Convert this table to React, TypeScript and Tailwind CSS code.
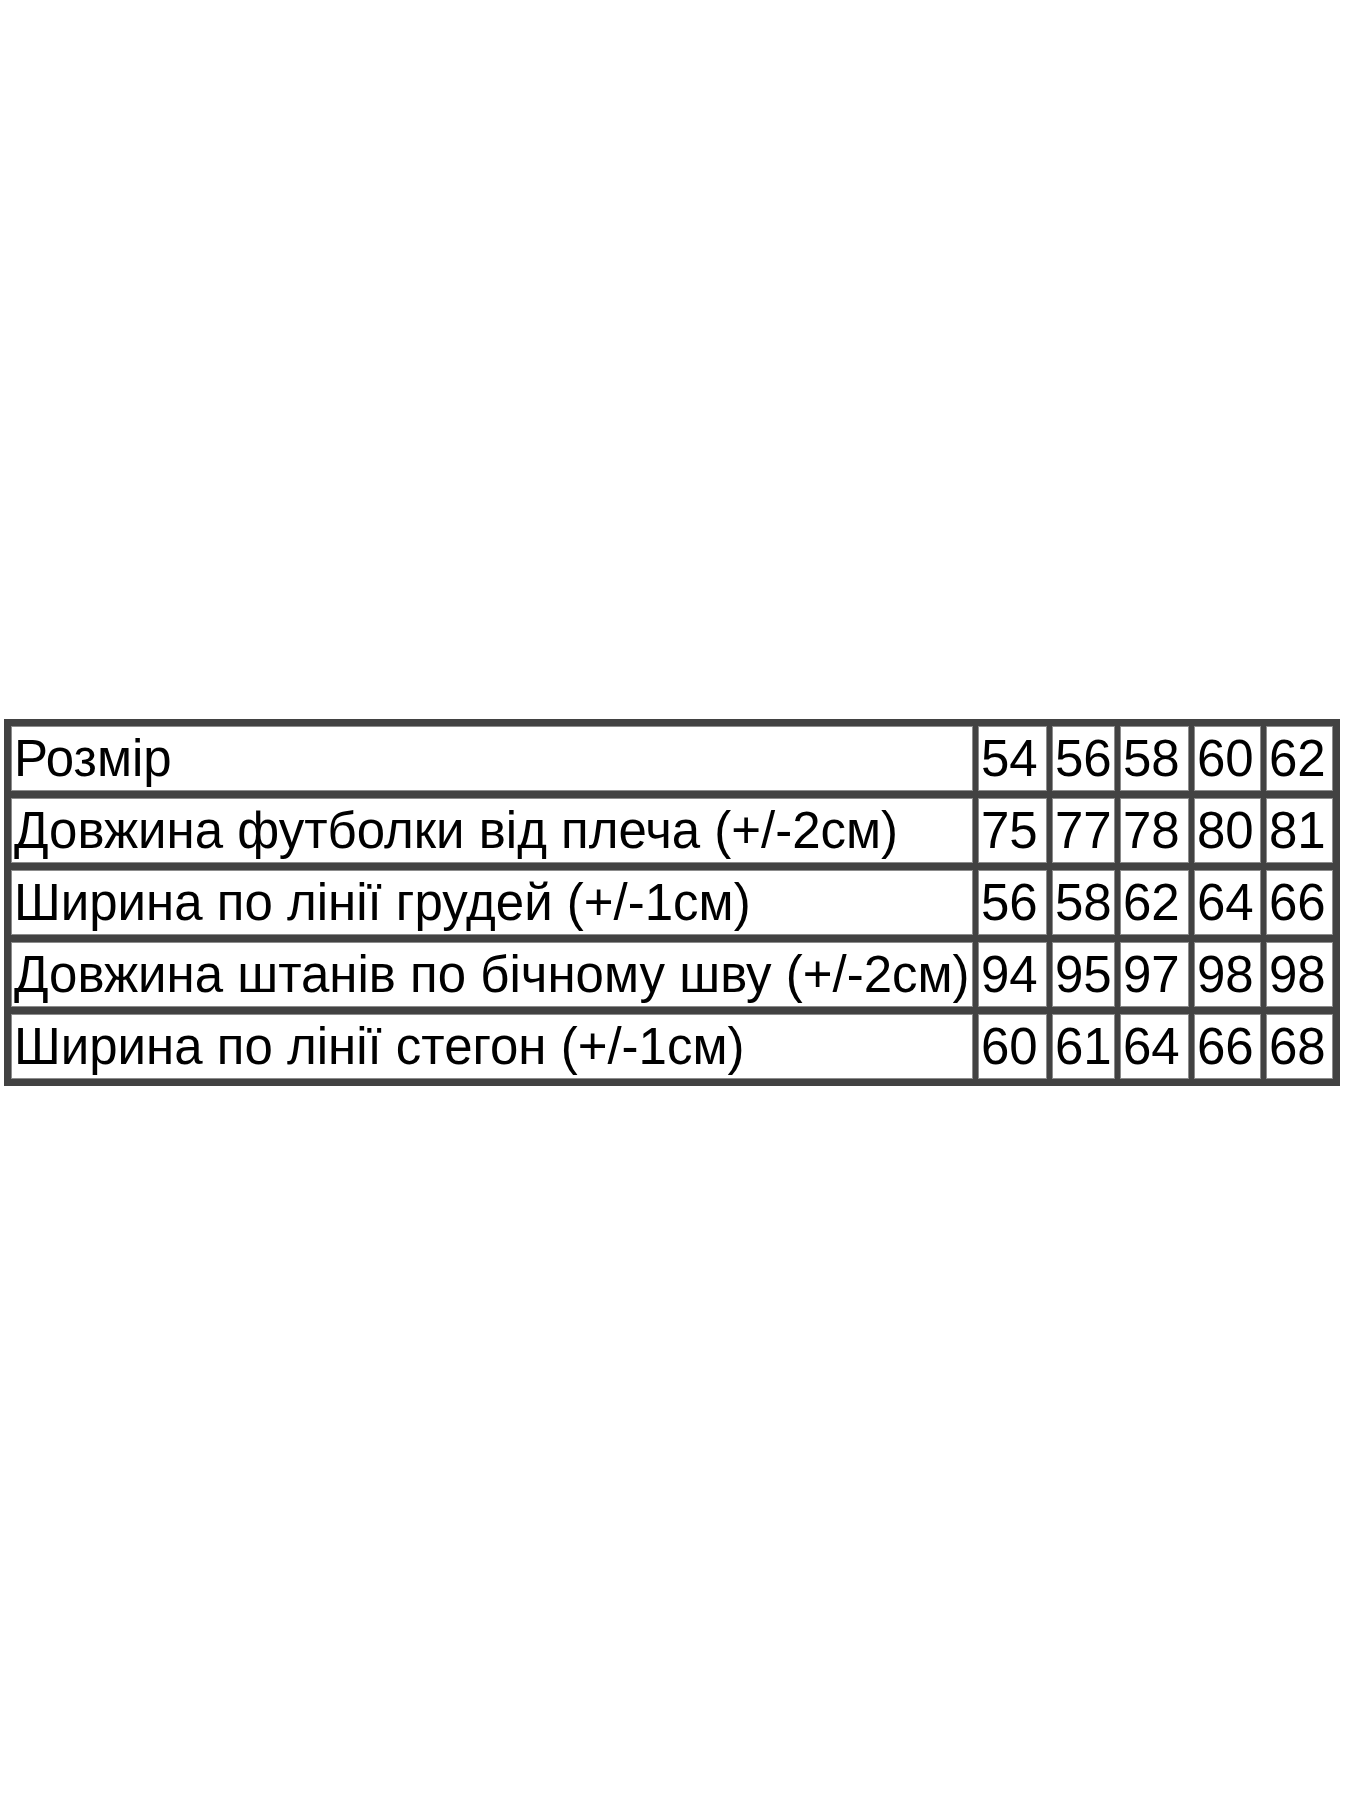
import React from "react";

const rows: [string, string[]][] = [
  ["Розмір", ["54", "56", "58", "60", "62"]],
  ["Довжина футболки від плеча (+/-2см)", ["75", "77", "78", "80", "81"]],
  ["Ширина по лінії грудей (+/-1см)", ["56", "58", "62", "64", "66"]],
  ["Довжина штанів по бічному шву (+/-2см)", ["94", "95", "97", "98", "98"]],
  ["Ширина по лінії стегон (+/-1см)", ["60", "61", "64", "66", "68"]],
];

export default function App() {
  return (
    <div className="w-[1350px] h-[1800px] bg-white pt-[719px] pl-[4px]">
      <div className="inline-grid grid-cols-[962px_69px_63px_69px_67px_67px] gap-x-[5px] gap-y-[7px] bg-[#424242] p-[7px] font-['Liberation_Sans',Arial,sans-serif] text-[51px] leading-[64px] text-black">
        {rows.map(([label, vals], i) => (
          <React.Fragment key={i}>
            <div className="h-[65px] border border-[#8c8c8c] bg-white pl-[2px] whitespace-nowrap overflow-hidden">{label}</div>
            {vals.map((v, j) => (
              <div key={j} className="h-[65px] border border-[#8c8c8c] bg-white pl-[2px] whitespace-nowrap overflow-hidden">{v}</div>
            ))}
          </React.Fragment>
        ))}
      </div>
    </div>
  );
}
